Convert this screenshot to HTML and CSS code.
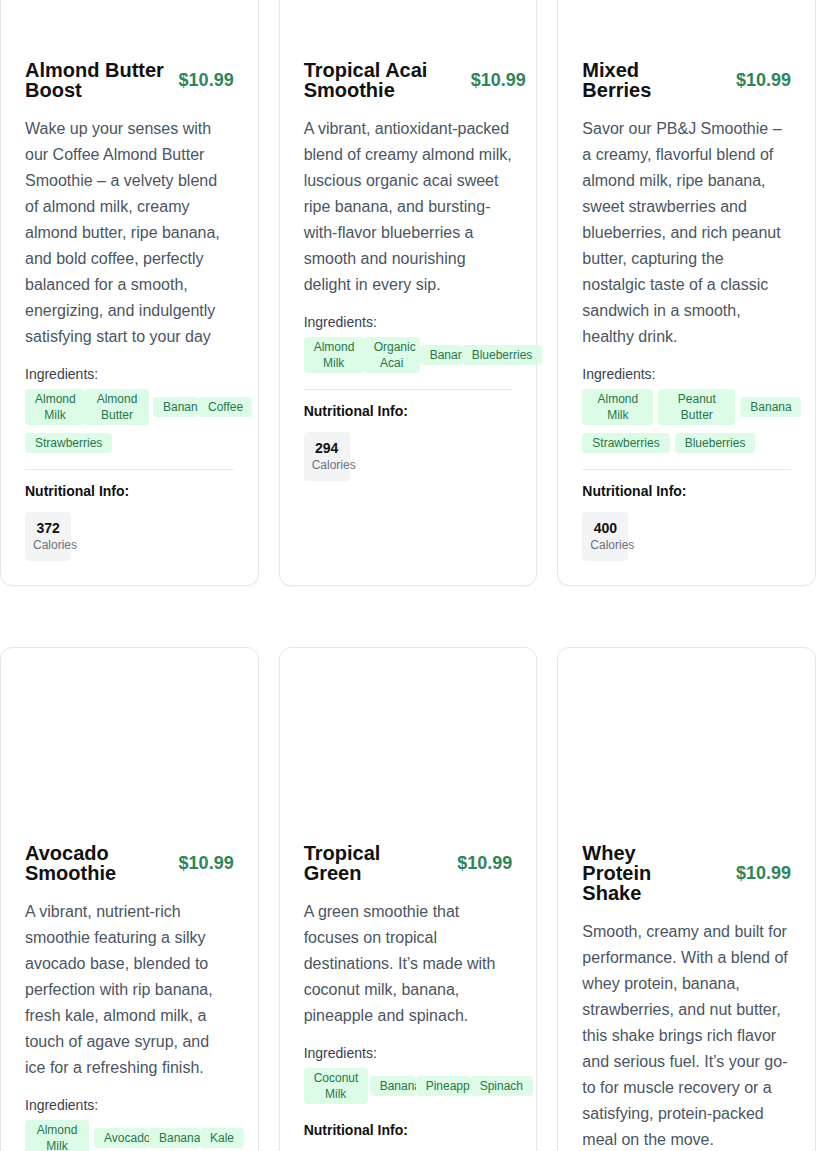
FILE: index.html
```html
<!DOCTYPE html>
<html lang="en">
<head>
<meta charset="utf-8">
<title>Smoothies</title>
<link rel="stylesheet" href="styles.css">
</head>
<body>
<main class="grid">

  <article class="card">
    <div class="media"></div>
    <div class="body">
      <div class="head">
        <h3 class="title">Almond Butter<br>Boost</h3>
        <span class="price">$10.99</span>
      </div>
      <p class="desc">Wake up your senses with our Coffee Almond Butter Smoothie – a velvety blend of almond milk, creamy almond butter, ripe banana, and bold coffee, perfectly balanced for a smooth, energizing, and indulgently satisfying start to your day</p>
      <h4 class="label">Ingredients:</h4>
      <div class="chips">
        <div class="chip-row">
          <span class="chip w60">Almond Milk</span>
          <span class="chip w64">Almond Butter</span>
          <span class="chip w45 sp4">Banana</span>
          <span class="chip w54">Coffee</span>
        </div>
        <div class="chip-row">
          <span class="chip">Strawberries</span>
        </div>
      </div>
      <section class="nutri ruled">
        <h4 class="nutri-title">Nutritional Info:</h4>
        <div class="nutri-grid">
          <div class="nutri-box"><div class="nv">372</div><div class="nl">Calories</div></div>
        </div>
      </section>
    </div>
  </article>

  <article class="card">
    <div class="media"></div>
    <div class="body">
      <div class="head">
        <h3 class="title title-wide">Tropical Acai<br>Smoothie</h3>
        <span class="price">$10.99</span>
      </div>
      <p class="desc">A vibrant, antioxidant-packed blend of creamy almond milk, luscious organic acai sweet ripe banana, and bursting-with-flavor blueberries a smooth and nourishing delight in every sip.</p>
      <h4 class="label">Ingredients:</h4>
      <div class="chips">
        <div class="chip-row">
          <span class="chip w60">Almond Milk</span>
          <span class="chip w56">Organic Acai</span>
          <span class="chip w42">Banana</span>
          <span class="chip">Blueberries</span>
        </div>
      </div>
      <section class="nutri ruled">
        <h4 class="nutri-title">Nutritional Info:</h4>
        <div class="nutri-grid">
          <div class="nutri-box"><div class="nv">294</div><div class="nl">Calories</div></div>
        </div>
      </section>
    </div>
  </article>

  <article class="card">
    <div class="media"></div>
    <div class="body">
      <div class="head">
        <h3 class="title">Mixed<br>Berries</h3>
        <span class="price">$10.99</span>
      </div>
      <p class="desc">Savor our PB&amp;J Smoothie – a creamy, flavorful blend of almond milk, ripe banana, sweet strawberries and blueberries, and rich peanut butter, capturing the nostalgic taste of a classic sandwich in a smooth, healthy drink.</p>
      <h4 class="label">Ingredients:</h4>
      <div class="chips">
        <div class="chip-row">
          <span class="chip w71">Almond Milk</span>
          <span class="chip w77 sp5">Peanut Butter</span>
          <span class="chip w61 sp5">Banana</span>
        </div>
        <div class="chip-row">
          <span class="chip">Strawberries</span>
          <span class="chip sp5">Blueberries</span>
        </div>
      </div>
      <section class="nutri ruled">
        <h4 class="nutri-title">Nutritional Info:</h4>
        <div class="nutri-grid">
          <div class="nutri-box"><div class="nv">400</div><div class="nl">Calories</div></div>
        </div>
      </section>
    </div>
  </article>

  <article class="card">
    <div class="media"></div>
    <div class="body">
      <div class="head">
        <h3 class="title">Avocado<br>Smoothie</h3>
        <span class="price">$10.99</span>
      </div>
      <p class="desc">A vibrant, nutrient-rich smoothie featuring a silky avocado base, blended to perfection with rip banana, fresh kale, almond milk, a touch of agave syrup, and ice for a refreshing finish.</p>
      <h4 class="label">Ingredients:</h4>
      <div class="chips">
        <div class="chip-row">
          <span class="chip w64">Almond Milk</span>
          <span class="chip w55 sp5">Avocado</span>
          <span class="chip w51">Banana</span>
          <span class="chip">Kale</span>
        </div>
      </div>
      <section class="nutri">
        <h4 class="nutri-title">Nutritional Info:</h4>
        <div class="nutri-grid">
          <div class="nutri-box"><div class="nv">350</div><div class="nl">Calories</div></div>
        </div>
      </section>
    </div>
  </article>

  <article class="card">
    <div class="media"></div>
    <div class="body">
      <div class="head">
        <h3 class="title">Tropical<br>Green</h3>
        <span class="price">$10.99</span>
      </div>
      <p class="desc">A green smoothie that focuses on tropical destinations. It’s made with coconut milk, banana, pineapple and spinach.</p>
      <h4 class="label">Ingredients:</h4>
      <div class="chips">
        <div class="chip-row">
          <span class="chip w64">Coconut Milk</span>
          <span class="chip w46 sp2">Banana</span>
          <span class="chip w54">Pineapple</span>
          <span class="chip">Spinach</span>
        </div>
      </div>
      <section class="nutri">
        <h4 class="nutri-title">Nutritional Info:</h4>
        <div class="nutri-grid">
          <div class="nutri-box"><div class="nv">280</div><div class="nl">Calories</div></div>
        </div>
      </section>
    </div>
  </article>

  <article class="card">
    <div class="media"></div>
    <div class="body">
      <div class="head">
        <h3 class="title">Whey<br>Protein<br>Shake</h3>
        <span class="price">$10.99</span>
      </div>
      <p class="desc">Smooth, creamy and built for performance. With a blend of whey protein, banana, strawberries, and nut butter, this shake brings rich flavor and serious fuel. It’s your go-to for muscle recovery or a satisfying, protein-packed meal on the move.</p>
      <h4 class="label">Ingredients:</h4>
      <div class="chips">
        <div class="chip-row">
          <span class="chip w64">Whey Protein</span>
          <span class="chip sp5">Banana</span>
          <span class="chip sp5">Nut Butter</span>
        </div>
        <div class="chip-row">
          <span class="chip">Strawberries</span>
        </div>
      </div>
      <section class="nutri">
        <h4 class="nutri-title">Nutritional Info:</h4>
        <div class="nutri-grid">
          <div class="nutri-box"><div class="nv">420</div><div class="nl">Calories</div></div>
        </div>
      </section>
    </div>
  </article>

</main>
</body>
</html>
```

FILE: styles.css
```css
* { box-sizing: border-box; }

html, body {
  margin: 0;
  padding: 0;
  background: #ffffff;
}

body {
  font-family: "Liberation Sans", Arial, sans-serif;
  color: #111827;
}

.grid {
  display: grid;
  grid-template-columns: repeat(3, minmax(0, 1fr));
  column-gap: 20px;
  row-gap: 61px;
  margin-top: -136px;
}

.card {
  min-width: 0;
  background: #ffffff;
  border: 1px solid #e5e7eb;
  border-radius: 12px;
  box-shadow: 0 1px 2px rgba(0, 0, 0, 0.04);
}

.media {
  height: 171px;
}

.body {
  padding: 24px;
}

.head {
  display: flex;
  align-items: center;
  justify-content: space-between;
  gap: 12px;
}

.title {
  margin: 0;
  font-size: 20px;
  line-height: 20px;
  font-weight: 700;
  color: #111111;
  white-space: nowrap;
}

.title-wide {
  flex: none;
  width: 155px;
}

.price {
  flex: none;
  font-size: 18px;
  line-height: 24px;
  font-weight: 700;
  color: #2f855a;
}

.desc {
  margin: 16px 0 0;
  font-size: 16px;
  line-height: 26px;
  color: #4b5563;
}

.label {
  margin: 16px 0 7px;
  font-size: 14px;
  line-height: 16px;
  font-weight: 400;
  color: #374151;
}

.chips {
  display: flex;
  flex-direction: column;
  gap: 8px;
  margin-bottom: 16px;
}

.chip-row {
  display: flex;
  align-items: center;
}

.chip {
  flex: none;
  padding: 2px 10px;
  font-size: 12px;
  line-height: 16px;
  text-align: center;
  color: #2a7548;
  background: #dcfce7;
  border-radius: 4px;
}

.w42 { width: 42px; }
.w45 { width: 45px; }
.w46 { width: 46px; }
.w51 { width: 51px; }
.w54 { width: 54px; }
.w55 { width: 55px; }
.w56 { width: 56px; }
.w60 { width: 60px; }
.w61 { width: 61px; }
.w64 { width: 64px; }
.w71 { width: 71px; }
.w77 { width: 77px; }

.sp2 { margin-left: 2px; }
.sp4 { margin-left: 4px; }
.sp5 { margin-left: 5px; }

.nutri {
  padding-top: 2px;
}

.nutri.ruled {
  border-top: 1px solid #e5e7eb;
  padding-top: 13px;
}

.nutri-title {
  margin: 0 0 13px;
  font-size: 14px;
  line-height: 16px;
  font-weight: 700;
  color: #111111;
}

.nutri-grid {
  display: grid;
  grid-template-columns: repeat(4, minmax(0, 1fr));
  gap: 8px;
}

.nutri-box {
  background: #f3f4f6;
  border-radius: 4px;
  padding: 8px;
  text-align: center;
}

.nv {
  font-size: 14px;
  line-height: 16px;
  font-weight: 700;
  color: #111111;
}

.nl {
  margin-top: 1px;
  font-size: 12px;
  line-height: 16px;
  color: #6b7280;
}
```
